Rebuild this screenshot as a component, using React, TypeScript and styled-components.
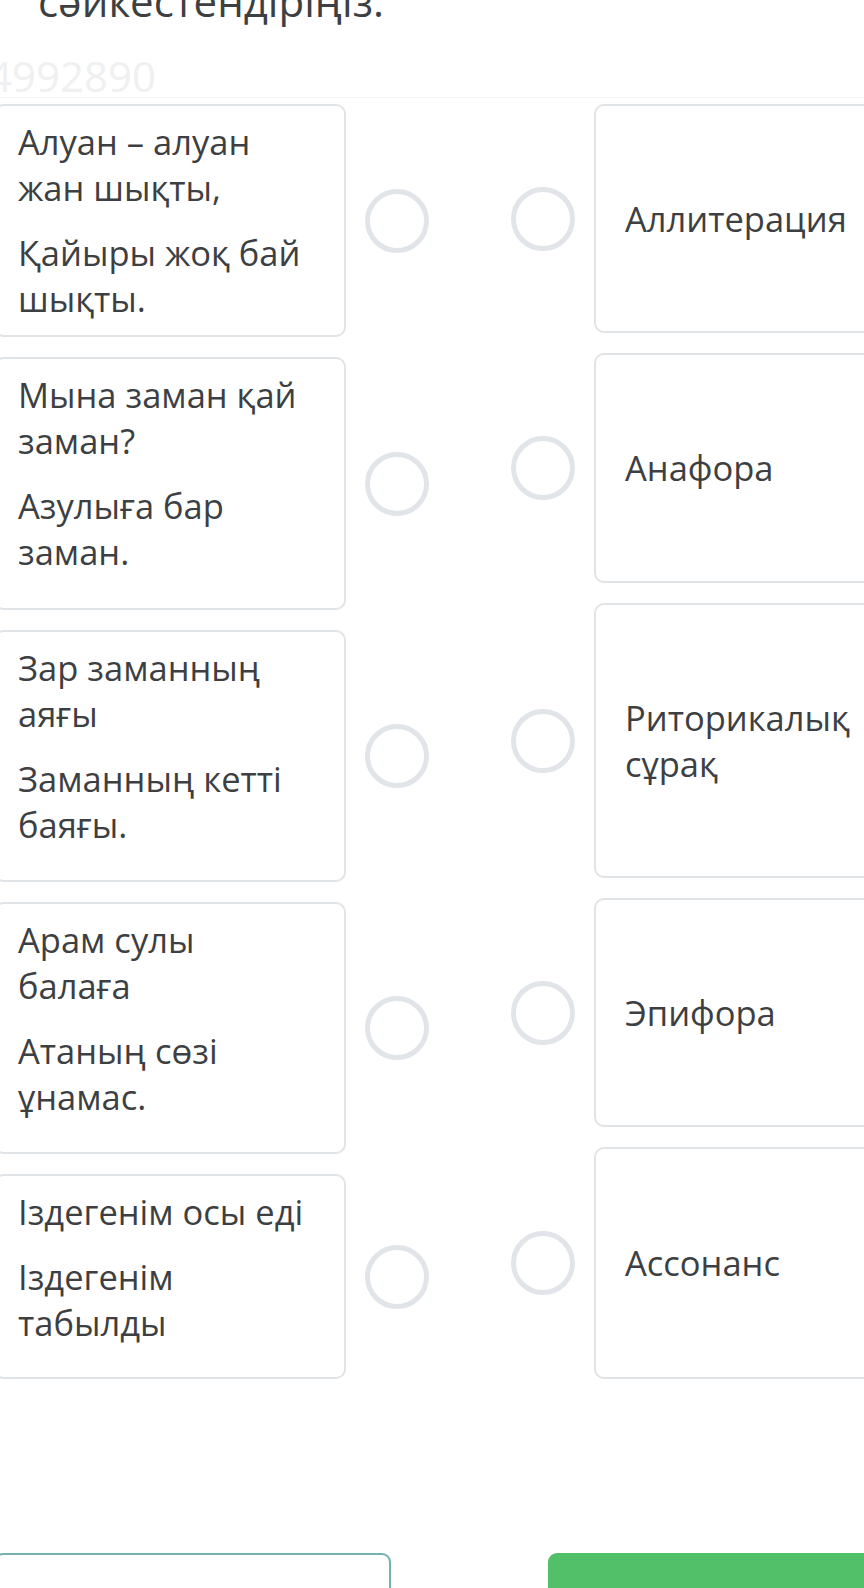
import React from "react";
import styled, { createGlobalStyle } from "styled-components";

const Global = createGlobalStyle`
  html, body {
    margin: 0;
    padding: 0;
    background: #ffffff;
  }
  body {
    font-family: "Open Sans", "Noto Sans", sans-serif;
    color: #3d3f42;
    overflow: hidden;
  }
  #root {
    width: 864px;
    height: 1588px;
    overflow: hidden;
  }
`;

const Page = styled.div`
  margin-left: -6px;
  width: 910px;
  display: flex;
  flex-direction: column;
`;

const Title = styled.h2`
  margin: -24px 0 0 44px;
  font-size: 42px;
  line-height: 50px;
  font-weight: 400;
  color: #3d3f42;
  white-space: nowrap;
`;

const Header = styled.div`
  margin-top: 26px;
  height: 45px;
  border-bottom: 1px solid #f3f4f5;
`;

const Watermark = styled.div`
  margin-left: -6px;
  font-size: 42px;
  line-height: 48px;
  color: #eff0f1;
  white-space: nowrap;
`;

const Board = styled.div`
  margin-top: 6px;
  display: grid;
  grid-template-columns: 435px 393px;
  column-gap: 82px;
  align-items: start;
`;

const Column = styled.div`
  display: flex;
  flex-direction: column;
  gap: 20px;
`;

const Item = styled.div<{ $side: "left" | "right" }>`
  display: flex;
  flex-direction: ${(p) => (p.$side === "left" ? "row" : "row-reverse")};
  align-items: center;
  gap: 19px;
`;

const Card = styled.div<{ $side: "left" | "right"; $h: number }>`
  flex: 1;
  box-sizing: border-box;
  height: ${(p) => p.$h}px;
  border: 2px solid #e1e4e7;
  border-radius: 10px;
  background: #ffffff;
  font-size: 34.5px;
  line-height: 46px;
  color: #3d3f42;
  display: flex;
  flex-direction: column;
  justify-content: ${(p) => (p.$side === "left" ? "flex-start" : "center")};
  padding: ${(p) => (p.$side === "left" ? "13px 37px 0 22px" : "0 20px 0 29px")};
`;

const Line = styled.p`
  margin: 0;
  & + & {
    margin-top: 19px;
  }
`;

const Dot = styled.div`
  flex: none;
  box-sizing: border-box;
  width: 64px;
  height: 64px;
  border-radius: 50%;
  border: 5px solid #e1e4e8;
  background: #ffffff;
`;

const Footer = styled.div`
  margin-top: 174px;
  display: flex;
  justify-content: space-between;
`;

const OutlineButton = styled.button`
  width: 397px;
  height: 64px;
  box-sizing: border-box;
  border: 2px solid #74b1b3;
  border-radius: 9px;
  background: #ffffff;
`;

const SolidButton = styled.button`
  width: 356px;
  height: 64px;
  border: none;
  border-radius: 9px;
  background: #52bf69;
`;

const leftItems: { lines: string[]; h: number }[] = [
  { lines: ["Алуан – алуан жан шықты,", "Қайыры жоқ бай шықты."], h: 233 },
  { lines: ["Мына заман қай заман?", "Азулыға бар заман."], h: 253 },
  { lines: ["Зар заманның аяғы", "Заманның кетті баяғы."], h: 252 },
  { lines: ["Арам сулы балаға", "Атаның сөзі ұнамас."], h: 252 },
  { lines: ["Іздегенім осы еді", "Іздегенім табылды"], h: 205 },
];

const rightItems: { text: string; h: number }[] = [
  { text: "Аллитерация", h: 229 },
  { text: "Анафора", h: 230 },
  { text: "Риторикалық сұрақ", h: 275 },
  { text: "Эпифора", h: 229 },
  { text: "Ассонанс", h: 232 },
];

export default function App() {
  return (
    <>
      <Global />
      <Page>
        <Title>сәйкестендіріңіз.</Title>
        <Header>
          <Watermark>4992890</Watermark>
        </Header>
        <Board>
          <Column>
            {leftItems.map((it, i) => (
              <Item key={i} $side="left">
                <Card $side="left" $h={it.h}>
                  {it.lines.map((l, j) => (
                    <Line key={j}>{l}</Line>
                  ))}
                </Card>
                <Dot />
              </Item>
            ))}
          </Column>
          <Column>
            {rightItems.map((it, i) => (
              <Item key={i} $side="right">
                <Card $side="right" $h={it.h}>
                  <Line>{it.text}</Line>
                </Card>
                <Dot />
              </Item>
            ))}
          </Column>
        </Board>
        <Footer>
          <OutlineButton aria-label="Артқа" />
          <SolidButton aria-label="Келесі" />
        </Footer>
      </Page>
    </>
  );
}
